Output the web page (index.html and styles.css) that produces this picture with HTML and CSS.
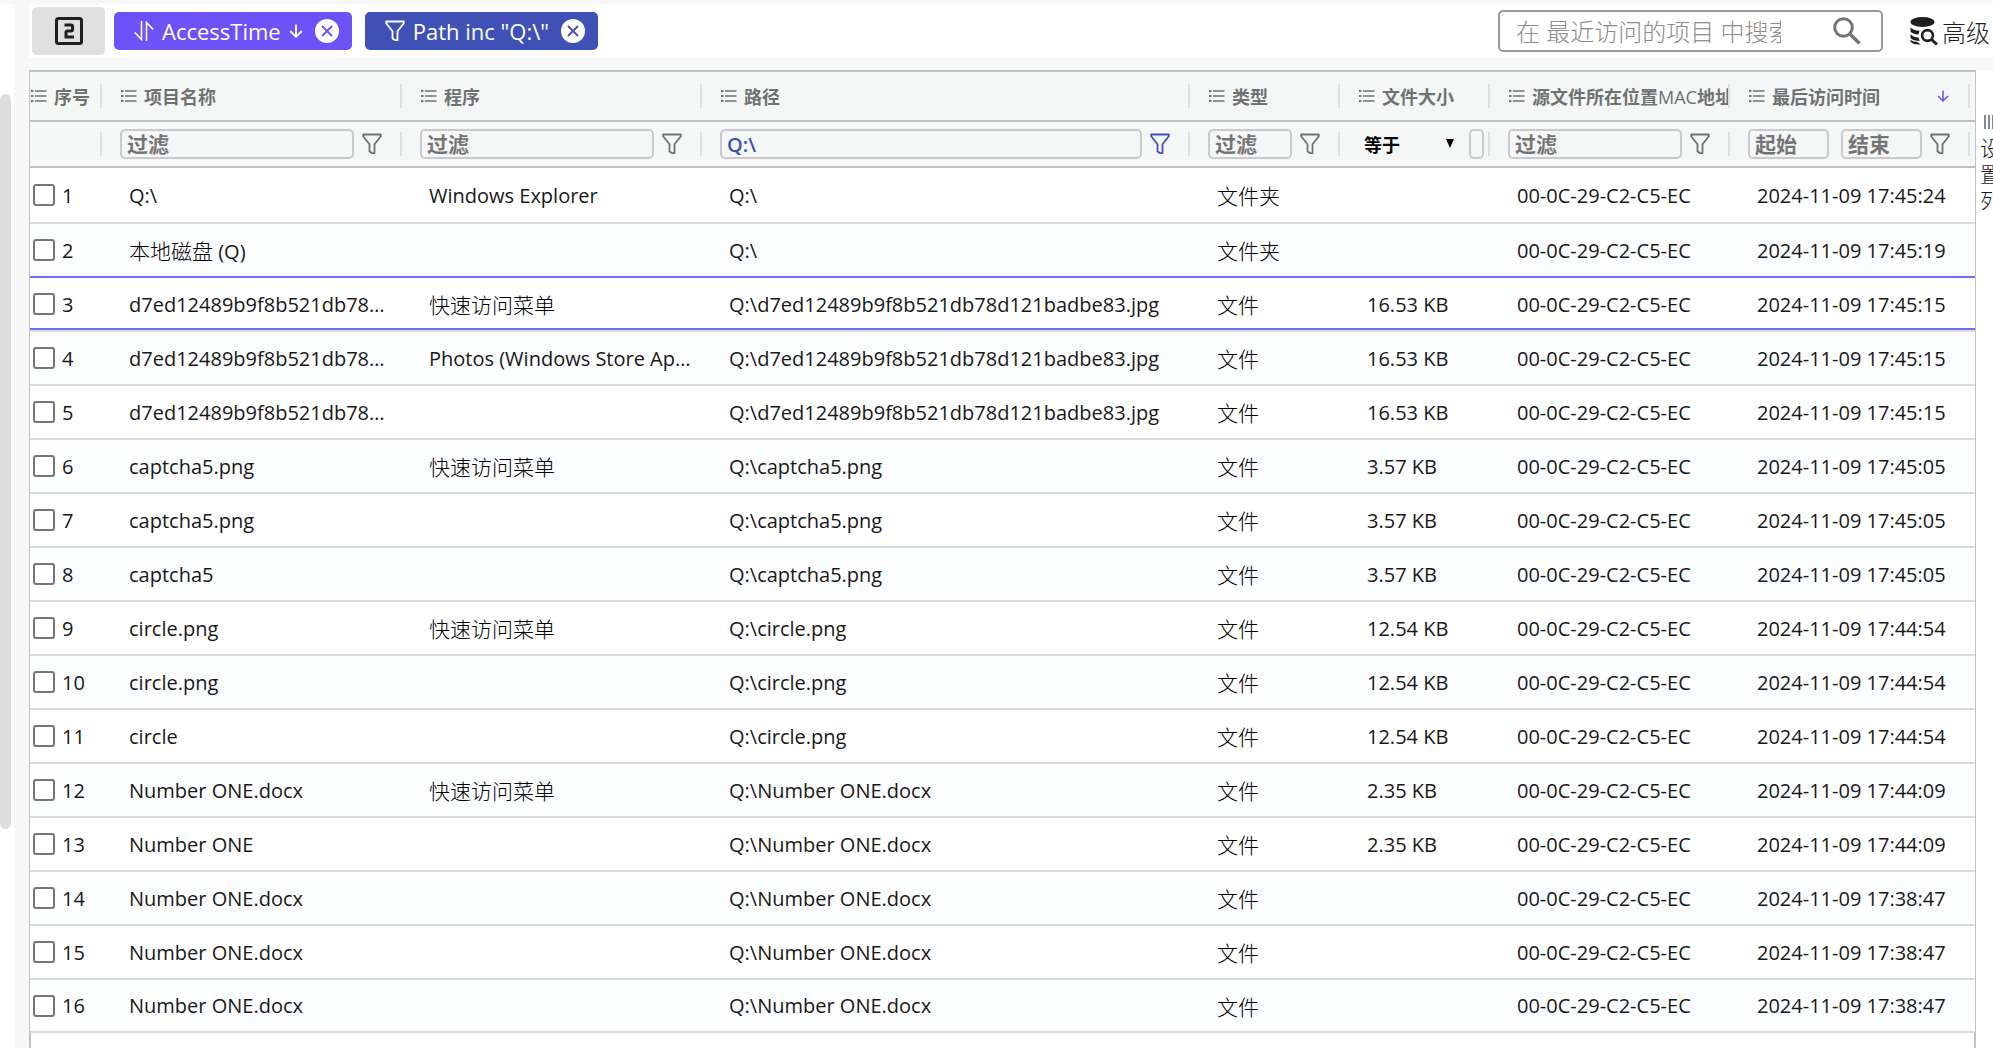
FILE: index.html
```html
<!DOCTYPE html>
<html lang="zh-CN">
<head>
    <meta charset="UTF-8">
    <meta name="viewport" content="width=device-width, initial-scale=1.0">
    <title>最近访问的项目</title>
    <link rel="stylesheet" href="styles.css">
</head>
<body>
    <!-- shared icons -->
    <svg class="sprite" aria-hidden="true">
        <symbol id="i-menu" viewBox="0 0 16 16">
            <path d="M0 2h2.4v2H0zM0 7h2.4v2H0zM0 12h2.4v2H0z" fill="currentColor"/>
            <path d="M4 3h11.500M4 8h11.500M4 13h11.500" stroke="currentColor" stroke-width="1.400"/>
        </symbol>
        <symbol id="i-filter" viewBox="0 0 20 22">
            <path d="M1.200 1.500h17.600v1.800l-6.300 8v8.900l-2.600-.1-2.400-1.700v-7.100l-6.300-8z" fill="none" stroke="currentColor" stroke-width="1.800" stroke-linejoin="round"/>
        </symbol>
        <symbol id="i-close" viewBox="0 0 24 24">
            <circle cx="12" cy="12" r="12" fill="#fff"/>
            <path d="M7 7l10 10M17 7L7 17" stroke="currentColor" stroke-width="1.800"/>
        </symbol>
        <symbol id="i-down" viewBox="0 0 14 14">
            <path d="M7 .5v12M1.200 7L7 12.800 12.800 7" fill="none" stroke="currentColor" stroke-width="1.800"/>
        </symbol>
    </svg>

    <div class="app">
        <div class="rail"><div class="thumb"></div></div>
        <main class="main">
            <div class="toolbar">
                <button class="level" aria-label="2">
                    <svg width="28" height="28" viewBox="0 0 28 28" fill="none" stroke="currentColor">
                        <rect x="1.500" y="1.500" width="25" height="25" rx="2" stroke-width="3"/>
                        <path d="M9.500 8h6.500q1.500 0 1.500 1.500v3q0 1.500-1.500 1.500h-3.500q-1.500 0-1.500 1.500v4.500h8" stroke-width="3"/>
                    </svg>
                </button>
                <div class="tag tag-sort">
                    <svg width="20" height="20" viewBox="0 0 20 20" fill="none" stroke="currentColor" stroke-width="1.600">
                        <path d="M7.500 0v18.500L.8 11.500M12.500 20V1.500l6.700 7"/>
                    </svg>
                    <span>AccessTime</span>
                    <svg class="dir" width="14" height="14"><use href="#i-down"/></svg>
                    <button class="tag-close" aria-label="移除排序"><svg width="24" height="24"><use href="#i-close"/></svg></button>
                </div>
                <div class="tag tag-filter">
                    <svg width="20" height="22"><use href="#i-filter"/></svg>
                    <span>Path inc "Q:\"</span>
                    <button class="tag-close" aria-label="移除过滤"><svg width="24" height="24"><use href="#i-close"/></svg></button>
                </div>
                <div class="search">
                    <input type="text" aria-label="搜索" placeholder="在 最近访问的项目 中搜索">
                    <button aria-label="搜索">
                        <svg width="28" height="28" viewBox="0 0 28 28" fill="none" stroke="currentColor">
                            <circle cx="10.500" cy="10.500" r="8.800" stroke-width="3"/>
                            <path d="M17 17l9.500 9.500" stroke-width="3.600"/>
                        </svg>
                    </button>
                </div>
                <button class="advanced">
                    <svg width="28" height="28" viewBox="0 0 28 28">
                        <ellipse cx="12.500" cy="5" rx="12" ry="5" fill="currentColor"/>
                        <path d="M.5 10.500q3 3 9 3.300l-1 3.700q-6-.5-8-3zM.5 17.500q3 2.800 8 3l1.200 3.500q-6.500-.2-9.200-3zM.5 23q3 2 7 2l3 2.500q-8 .5-10-3z" fill="currentColor"/>
                        <circle cx="17.500" cy="18.500" r="5.400" fill="none" stroke="currentColor" stroke-width="2.600"/>
                        <path d="M21.500 22.500l5.500 5" stroke="currentColor" stroke-width="3"/>
                    </svg>
                    高级
                </button>
            </div>

            <div class="content">
                <div class="grid">
                    <table>
                        <colgroup>
                            <col class="c-no"><col class="c-name"><col class="c-prog"><col class="c-path">
                            <col class="c-type"><col class="c-size"><col class="c-mac"><col class="c-time">
                        </colgroup>
                        <thead>
                            <tr class="heads">
                                <th><div class="cell"><svg class="menu"><use href="#i-menu"/></svg>序号</div></th>
                                <th><div class="cell"><svg class="menu"><use href="#i-menu"/></svg>项目名称</div></th>
                                <th><div class="cell"><svg class="menu"><use href="#i-menu"/></svg>程序</div></th>
                                <th><div class="cell"><svg class="menu"><use href="#i-menu"/></svg>路径</div></th>
                                <th><div class="cell"><svg class="menu"><use href="#i-menu"/></svg>类型</div></th>
                                <th><div class="cell"><svg class="menu"><use href="#i-menu"/></svg>文件大小</div></th>
                                <th><div class="cell"><svg class="menu"><use href="#i-menu"/></svg><span>源文件所在位置<span class="thin">MAC</span>地址</span></div></th>
                                <th><div class="cell"><svg class="menu"><use href="#i-menu"/></svg>最后访问时间<svg class="sorted"><use href="#i-down"/></svg></div></th>
                            </tr>
                            <tr class="filters">
                                <td><div class="cell"></div></td>
                                <td><div class="cell"><input type="text" aria-label="项目名称" placeholder="过滤"><svg class="funnel"><use href="#i-filter"/></svg></div></td>
                                <td><div class="cell"><input type="text" aria-label="程序" placeholder="过滤"><svg class="funnel"><use href="#i-filter"/></svg></div></td>
                                <td><div class="cell active"><input type="text" aria-label="路径" value="Q:\"><svg class="funnel"><use href="#i-filter"/></svg></div></td>
                                <td><div class="cell"><input type="text" aria-label="类型" placeholder="过滤"><svg class="funnel"><use href="#i-filter"/></svg></div></td>
                                <td>
                                    <div class="cell size-cell">
                                        <div class="op">
                                            <select aria-label="比较方式"><option>等于</option></select>
                                            <svg width="8" height="9" viewBox="0 0 8 9"><path d="M0 0h8L4 9z"/></svg>
                                        </div>
                                        <input type="text" aria-label="文件大小">
                                    </div>
                                </td>
                                <td><div class="cell"><input type="text" aria-label="MAC地址" placeholder="过滤"><svg class="funnel"><use href="#i-filter"/></svg></div></td>
                                <td><div class="cell"><input class="from" type="text" aria-label="起始时间" placeholder="起始"><input type="text" aria-label="结束时间" placeholder="结束"><svg class="funnel"><use href="#i-filter"/></svg></div></td>
                            </tr>
                        </thead>
                        <tbody>
                            <tr><td><label><input type="checkbox">1</label></td><td>Q:\</td><td>Windows Explorer</td><td>Q:\</td><td class="zh">文件夹</td><td></td><td>00-0C-29-C2-C5-EC</td><td>2024-11-09 17:45:24</td></tr>
                            <tr><td><label><input type="checkbox">2</label></td><td><span class="zh">本地磁盘</span> (Q)</td><td></td><td>Q:\</td><td class="zh">文件夹</td><td></td><td>00-0C-29-C2-C5-EC</td><td>2024-11-09 17:45:19</td></tr>
                            <tr class="selected"><td><label><input type="checkbox">3</label></td><td>d7ed12489b9f8b521db78d121badbe83.jpg</td><td class="zh">快速访问菜单</td><td>Q:\d7ed12489b9f8b521db78d121badbe83.jpg</td><td class="zh">文件</td><td>16.53 KB</td><td>00-0C-29-C2-C5-EC</td><td>2024-11-09 17:45:15</td></tr>
                            <tr><td><label><input type="checkbox">4</label></td><td>d7ed12489b9f8b521db78d121badbe83.jpg</td><td>Photos (Windows Store Application)</td><td>Q:\d7ed12489b9f8b521db78d121badbe83.jpg</td><td class="zh">文件</td><td>16.53 KB</td><td>00-0C-29-C2-C5-EC</td><td>2024-11-09 17:45:15</td></tr>
                            <tr><td><label><input type="checkbox">5</label></td><td>d7ed12489b9f8b521db78d121badbe83.jpg</td><td></td><td>Q:\d7ed12489b9f8b521db78d121badbe83.jpg</td><td class="zh">文件</td><td>16.53 KB</td><td>00-0C-29-C2-C5-EC</td><td>2024-11-09 17:45:15</td></tr>
                            <tr><td><label><input type="checkbox">6</label></td><td>captcha5.png</td><td class="zh">快速访问菜单</td><td>Q:\captcha5.png</td><td class="zh">文件</td><td>3.57 KB</td><td>00-0C-29-C2-C5-EC</td><td>2024-11-09 17:45:05</td></tr>
                            <tr><td><label><input type="checkbox">7</label></td><td>captcha5.png</td><td></td><td>Q:\captcha5.png</td><td class="zh">文件</td><td>3.57 KB</td><td>00-0C-29-C2-C5-EC</td><td>2024-11-09 17:45:05</td></tr>
                            <tr><td><label><input type="checkbox">8</label></td><td>captcha5</td><td></td><td>Q:\captcha5.png</td><td class="zh">文件</td><td>3.57 KB</td><td>00-0C-29-C2-C5-EC</td><td>2024-11-09 17:45:05</td></tr>
                            <tr><td><label><input type="checkbox">9</label></td><td>circle.png</td><td class="zh">快速访问菜单</td><td>Q:\circle.png</td><td class="zh">文件</td><td>12.54 KB</td><td>00-0C-29-C2-C5-EC</td><td>2024-11-09 17:44:54</td></tr>
                            <tr><td><label><input type="checkbox">10</label></td><td>circle.png</td><td></td><td>Q:\circle.png</td><td class="zh">文件</td><td>12.54 KB</td><td>00-0C-29-C2-C5-EC</td><td>2024-11-09 17:44:54</td></tr>
                            <tr><td><label><input type="checkbox">11</label></td><td>circle</td><td></td><td>Q:\circle.png</td><td class="zh">文件</td><td>12.54 KB</td><td>00-0C-29-C2-C5-EC</td><td>2024-11-09 17:44:54</td></tr>
                            <tr><td><label><input type="checkbox">12</label></td><td>Number ONE.docx</td><td class="zh">快速访问菜单</td><td>Q:\Number ONE.docx</td><td class="zh">文件</td><td>2.35 KB</td><td>00-0C-29-C2-C5-EC</td><td>2024-11-09 17:44:09</td></tr>
                            <tr><td><label><input type="checkbox">13</label></td><td>Number ONE</td><td></td><td>Q:\Number ONE.docx</td><td class="zh">文件</td><td>2.35 KB</td><td>00-0C-29-C2-C5-EC</td><td>2024-11-09 17:44:09</td></tr>
                            <tr><td><label><input type="checkbox">14</label></td><td>Number ONE.docx</td><td></td><td>Q:\Number ONE.docx</td><td class="zh">文件</td><td></td><td>00-0C-29-C2-C5-EC</td><td>2024-11-09 17:38:47</td></tr>
                            <tr><td><label><input type="checkbox">15</label></td><td>Number ONE.docx</td><td></td><td>Q:\Number ONE.docx</td><td class="zh">文件</td><td></td><td>00-0C-29-C2-C5-EC</td><td>2024-11-09 17:38:47</td></tr>
                            <tr><td><label><input type="checkbox">16</label></td><td>Number ONE.docx</td><td></td><td>Q:\Number ONE.docx</td><td class="zh">文件</td><td></td><td>00-0C-29-C2-C5-EC</td><td>2024-11-09 17:38:47</td></tr>
                        </tbody>
                    </table>
                    <div class="grid-foot"></div>
                </div>
                <aside class="side">
                    <button>
                        <svg width="14" height="14" viewBox="0 0 14 14"><path d="M1 0v14M5 0v14M9 0v14M13 0v14" stroke="#7f8c8d" stroke-width="2"/></svg>
                        <span>设置列</span>
                    </button>
                </aside>
            </div>
        </main>
    </div>
</body>
</html>
```
FILE: styles.css
```css
* {
    box-sizing: border-box;
}
body {
    margin: 0;
    background-color: #f7f7f7;
    color: #181818;
    font-family: "Open Sans", "Noto Sans CJK SC", sans-serif;
    font-size: 20px;
    overflow: hidden;
}
button, input, select {
    font-family: inherit;
    color: inherit;
    padding: 0;
    margin: 0;
    border: none;
    background: none;
}
button {
    cursor: pointer;
}
svg {
    display: block;
    flex: none;
}
.sprite {
    width: 0;
    height: 0;
    position: absolute;
}
.app {
    display: flex;
    gap: 15px;
    height: 100vh;
    padding-top: 4px;
}
.rail {
    width: 14px;
    flex: none;
    padding-top: 90px;
    background-color: #fff;
}
.thumb {
    width: 11px;
    height: 77%;
    border-radius: 6px;
    background-color: #ddd;
}
.main {
    flex: 1;
    min-width: 0;
    display: flex;
    flex-direction: column;
    gap: 12px;
}

/* toolbar */
.toolbar {
    display: flex;
    align-items: center;
    height: 54px;
    padding: 0 3px;
    background-color: #fff;
}
.level {
    display: flex;
    align-items: center;
    justify-content: center;
    width: 73px;
    height: 48px;
    margin-right: 9px;
    border-radius: 5px;
    background-color: #e0e0e0;
    color: #1f1f1f;
}
.tag {
    display: flex;
    align-items: center;
    height: 38px;
    padding: 0 13px 0 20px;
    margin-right: 13px;
    border-radius: 5px;
    color: #fff;
    font-size: 22px;
    font-weight: 500;
    gap: 8px;
}
.tag-sort {
    background-color: #6c52f7;
}
.tag-filter {
    background-color: #3f51b5;
}
.tag-close {
    margin-left: 4px;
}
.tag-sort .tag-close {
    color: #6c52f7;
}
.tag-filter .tag-close {
    color: #3f51b5;
}
.search {
    display: flex;
    align-items: center;
    width: 385px;
    height: 42px;
    margin-left: auto;
    padding: 0 20px 0 16px;
    border: 2px solid #999;
    border-radius: 5px;
    color: #757575;
}
.search input {
    width: 265px;
    margin-right: auto;
    font-size: 24px;
    font-weight: 300;
    outline: none;
}
.search input::placeholder {
    color: #8c8c8c;
}
.advanced {
    display: flex;
    align-items: center;
    gap: 4px;
    margin-left: 27px;
    font-size: 24px;
    font-weight: 300;
    color: #1f1f1f;
}

/* grid */
.content {
    display: flex;
    flex: 1;
    min-height: 0;
}
.grid {
    flex: 1;
    min-width: 0;
    display: flex;
    flex-direction: column;
    border: 1px solid #bdc3c7;
    border-top-width: 2px;
    border-bottom: none;
    background-color: #fff;
}
.grid-foot {
    flex: 1;
    border: 1px solid #bdc3c7;
    border-width: 0 1px;
}
table {
    width: 100%;
    table-layout: fixed;
    border-collapse: separate;
    border-spacing: 0;
}
.c-no { width: 72px; }
.c-name, .c-prog { width: 300px; }
.c-type, .c-size { width: 150px; }
.c-mac { width: 240px; }
.c-time { width: 245px; }
th, td {
    padding: 0;
    text-align: left;
    vertical-align: middle;
}
thead th, thead td {
    background-color: #f5f7f7;
    border-bottom: 2px solid #bdc3c7;
    color: #6f7272;
}
thead th:last-child, thead td:last-child {
    padding-right: 5px;
}
.heads th {
    height: 50px;
    font-size: 18px;
    font-weight: bold;
}
.filters td {
    height: 46px;
}
.cell {
    display: flex;
    align-items: center;
    height: 24px;
    padding-left: 18px;
    border-right: 2px solid #dde0e1;
}
.heads .cell {
    gap: 7px;
    padding-left: 19px;
    white-space: nowrap;
    overflow: hidden;
}
.heads th:first-child .cell {
    padding-left: 1px;
}
.menu {
    width: 16px;
    height: 16px;
}
.thin {
    font-weight: normal;
}
.sorted {
    width: 12px;
    height: 14px;
    margin-left: auto;
    margin-right: 19px;
    color: #6c52f7;
}
.filters input {
    flex: 1;
    min-width: 0;
    height: 30px;
    padding: 0 5px;
    border: 2px solid #c8cbcc;
    border-radius: 5px;
    font-size: 21px;
    font-weight: bold;
}
.filters input::placeholder {
    color: #757575;
    opacity: 1;
}
.filters .from {
    margin-right: 12px;
}
.funnel {
    width: 20px;
    height: 22px;
    margin: 0 18px 0 8px;
}
.filters .active {
    color: #3f51b5;
}
.filters .active input {
    font-weight: 600;
    font-size: 20px;
}
.size-cell {
    gap: 10px;
    padding-right: 4px;
}
.op {
    position: relative;
    flex: none;
    width: 101px;
}
.op select {
    width: 100%;
    padding-left: 6px;
    appearance: none;
    color: #000;
    font-size: 18px;
    font-weight: bold;
}
.op svg {
    position: absolute;
    right: 5px;
    top: 50%;
    margin-top: -5px;
    pointer-events: none;
}

/* rows */
tbody td {
    height: 54px;
    padding: 0 8px 0 27px;
    border-bottom: 2px solid #d9dcde;
    white-space: nowrap;
    overflow: hidden;
    text-overflow: ellipsis;
}
tbody tr:first-child td {
    height: 56px;
}
tbody tr:last-child td {
    height: 53px;
}
tbody tr:nth-child(even) td {
    background-color: #fcfdfe;
}
tbody td:first-child {
    padding: 0 0 0 3px;
}
tbody .selected td {
    box-shadow: 0 -2px 0 #6f6cf8, inset 0 -2px 0 #6f6cf8;
}
tbody label {
    display: flex;
    align-items: center;
    gap: 7px;
}
tbody label input {
    appearance: none;
    flex: none;
    width: 22px;
    height: 22px;
    border: 2px solid #767676;
    border-radius: 3px;
    background-color: #fff;
}
.zh {
    color: #000;
    font-size: 21px;
    font-weight: 300;
}

/* column settings, on the right edge */
.side {
    width: 17px;
    flex: none;
    overflow: hidden;
    background-color: #fff;
}
.side button {
    display: flex;
    flex-direction: column;
    align-items: center;
    gap: 6px;
    width: 29px;
    padding-top: 45px;
}
.side span {
    width: 21px;
    font-size: 21px;
    font-weight: 300;
    line-height: 26px;
    word-break: break-all;
}
```
